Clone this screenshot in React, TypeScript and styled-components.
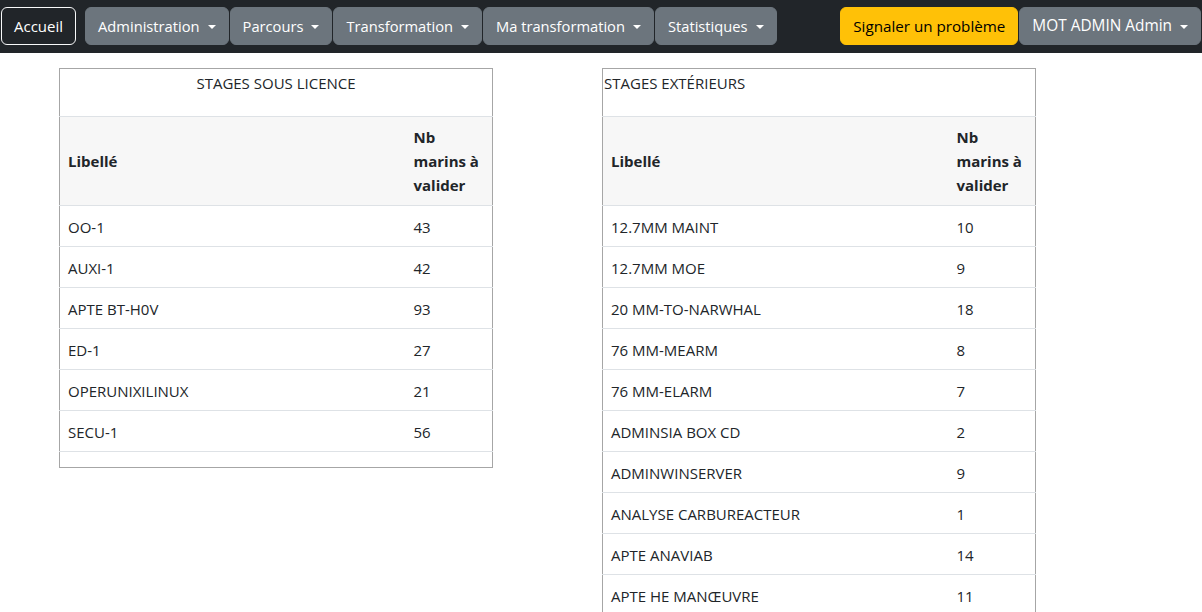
import { FC } from 'react';
import styled, { createGlobalStyle } from 'styled-components';

const GlobalStyle = createGlobalStyle`
  * { box-sizing: border-box; }
  body {
    margin: 0;
    background: #fff;
    color: #212529;
    font-family: "Open Sans", "Noto Sans", sans-serif;
    font-size: 15px;
    line-height: 24px;
  }
`;

const Navbar = styled.nav`
  display: flex;
  align-items: center;
  height: 53px;
  padding: 7px 0 8px 1px;
  background: #212529;
  overflow: hidden;
`;

const NavGroup = styled.div<{ right?: boolean }>`
  display: flex;
  align-items: center;
  margin-left: ${p => (p.right ? 'auto' : '0')};
`;

const Button = styled.button<{ variant: 'dark' | 'secondary' | 'warning'; size?: number }>`
  display: inline-flex;
  align-items: center;
  height: 38px;
  padding: 0 12px;
  border-radius: 6px;
  font-family: inherit;
  font-size: ${p => p.size ?? 14.7}px;
  line-height: 24px;
  white-space: nowrap;
  cursor: pointer;
  border: 1px solid
    ${p => (p.variant === 'dark' ? '#f8f9fa' : p.variant === 'warning' ? '#ffc107' : '#6c757d')};
  background: ${p =>
    p.variant === 'dark' ? '#212529' : p.variant === 'warning' ? '#ffc107' : '#6c757d'};
  color: ${p => (p.variant === 'warning' ? '#000' : '#fff')};
  margin-right: 1px;
`;

const Accueil = styled(Button)`
  margin-right: 9px;
`;

const Caret = styled.span`
  display: inline-block;
  margin-left: 8px;
  margin-top: 1px;
  width: 0;
  height: 0;
  border-top: 4px solid currentColor;
  border-left: 4px solid transparent;
  border-right: 4px solid transparent;
`;

const Content = styled.main`
  display: flex;
  align-items: flex-start;
  gap: 109px;
  padding: 15px 0 0 59px;
`;

const Table = styled.table`
  width: 434px;
  table-layout: fixed;
  border-collapse: collapse;
  border: 1px solid #a6a6a6;
`;

const TitleCell = styled.th<{ center?: boolean }>`
  height: 48px;
  padding: 2px ${p => (p.center ? '8px' : '1px')} 0;
  vertical-align: top;
  text-align: ${p => (p.center ? 'center' : 'left')};
  font-weight: 400;
  border-bottom: 1px solid #dee2e6;
`;

const HeadCell = styled.th`
  padding: 8px;
  background: #f7f7f7;
  text-align: left;
  vertical-align: middle;
  font-weight: 700;
  border-bottom: 1px solid #dee2e6;
`;

const Cell = styled.td`
  padding: 9px 8px 7px;
  height: 41px;
  border-bottom: 1px solid #dee2e6;
`;

const FootCell = styled.td`
  height: 16px;
  padding: 0;
`;

type Row = [string, number];

const licence: Row[] = [
  ['OO-1', 43],
  ['AUXI-1', 42],
  ['APTE BT-H0V', 93],
  ['ED-1', 27],
  ['OPERUNIXILINUX', 21],
  ['SECU-1', 56],
];

const exterieurs: Row[] = [
  ['12.7MM MAINT', 10],
  ['12.7MM MOE', 9],
  ['20 MM-TO-NARWHAL', 18],
  ['76 MM-MEARM', 8],
  ['76 MM-ELARM', 7],
  ['ADMINSIA BOX CD', 2],
  ['ADMINWINSERVER', 9],
  ['ANALYSE CARBUREACTEUR', 1],
  ['APTE ANAVIAB', 14],
  ['APTE HE MANŒUVRE', 11],
];

const StageTable: FC<{ title: string; rows: Row[]; center?: boolean; footer?: boolean }> = ({
  title,
  rows,
  center,
  footer,
}) => (
  <Table>
    <colgroup>
      <col />
      <col style={{ width: 87 }} />
    </colgroup>
    <thead>
      <tr>
        <TitleCell colSpan={2} center={center}>
          {title}
        </TitleCell>
      </tr>
      <tr>
        <HeadCell>Libellé</HeadCell>
        <HeadCell>Nb marins à valider</HeadCell>
      </tr>
    </thead>
    <tbody>
      {rows.map(([label, nb]) => (
        <tr key={label}>
          <Cell>{label}</Cell>
          <Cell>{nb}</Cell>
        </tr>
      ))}
    </tbody>
    {footer && (
      <tfoot>
        <tr>
          <FootCell colSpan={2} />
        </tr>
      </tfoot>
    )}
  </Table>
);

const menus = ['Administration', 'Parcours', 'Transformation', 'Ma transformation', 'Statistiques'];

const App: FC = () => (
  <>
    <GlobalStyle />
    <Navbar>
      <NavGroup>
        <Accueil variant="dark" size={15}>Accueil</Accueil>
        {menus.map(m => (
          <Button key={m} variant="secondary">
            {m}
            <Caret />
          </Button>
        ))}
      </NavGroup>
      <NavGroup right>
        <Button variant="warning" size={15.2}>Signaler un problème</Button>
        <Button variant="secondary" size={15.4}>
          MOT ADMIN Admin
          <Caret />
        </Button>
      </NavGroup>
    </Navbar>
    <Content>
      <StageTable title="STAGES SOUS LICENCE" rows={licence} center footer />
      <StageTable title="STAGES EXTÉRIEURS" rows={exterieurs} />
    </Content>
  </>
);

export default App;
